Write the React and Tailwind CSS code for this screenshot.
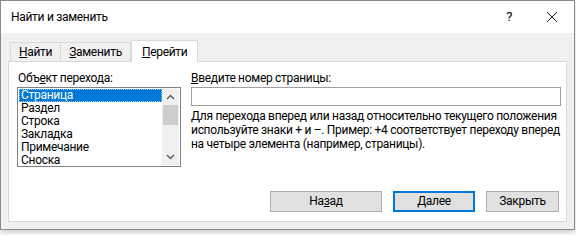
import React, { useState } from "react";

const items = ["Страница", "Раздел", "Строка", "Закладка", "Примечание", "Сноска"];

const Tab = ({ active, children, onClick }) => (
  <button
    onClick={onClick}
    className={
      active
        ? "relative z-10 -mb-px h-[22px] px-[10px] bg-white border border-b-0 border-[#d9d9d9] leading-[20px]"
        : "h-[19px] mt-[2px] px-[8px] bg-[#f0f0f0] border border-b-0 border-[#d9d9d9] -ml-px first:ml-0 leading-[18px]"
    }
  >
    {children}
  </button>
);

const Button = ({ primary, className, children }) => (
  <button
    className={
      "h-[21px] bg-[#e1e1e1] leading-[17px] " +
      (primary ? "border-2 border-[#0078d7] " : "border border-[#adadad] ") +
      className
    }
  >
    {children}
  </button>
);

export default function App() {
  const [tab, setTab] = useState(2);
  const [selected, setSelected] = useState(0);

  return (
    <div
      className="w-[576px] h-[235px] bg-white text-[12px] tracking-[-0.3px] text-black"
      style={{ fontFamily: 'Roboto, "Noto Sans", sans-serif' }}
    >
      <div className="w-[575px] h-[230px] flex flex-col bg-[#f0f0f0] border border-[#8a8a8a] shadow-[0_3px_5px_rgba(0,0,0,0.18)]">
        {/* title bar */}
        <div className="h-[32px] flex items-center bg-white">
          <span className="pl-[10px] text-[12px]">Найти и заменить</span>
          <span className="ml-auto mr-[34px] text-[13px]">?</span>
          <svg width="12" height="12" viewBox="0 0 12 12" className="mr-[16px]">
            <path d="M1 1 L11 11 M11 1 L1 11" stroke="#222" strokeWidth="1" />
          </svg>
        </div>

        <div className="flex-1 flex flex-col px-[7px] pt-[7px]">
          {/* tabs */}
          <div className="flex items-start pl-[2px] h-[21px]">
            <Tab active={tab === 0} onClick={() => setTab(0)}>
              <u>Н</u>айти
            </Tab>
            <Tab active={tab === 1} onClick={() => setTab(1)}>
              <u>З</u>аменить
            </Tab>
            <Tab active={tab === 2} onClick={() => setTab(2)}>
              <u>П</u>ерейти
            </Tab>
          </div>

          {/* panel */}
          <div className="h-[161px] flex flex-col bg-white border border-[#d9d9d9] pt-[8px] pb-[9px]">
            <div className="flex">
              <div className="w-[164px] shrink-0 ml-[8px]">
                <div className="h-[16px] leading-[16px] pl-[1px]">
                  Объ<u>е</u>кт перехода:
                </div>
                <div className="mt-[1px] h-[80px] flex border border-[#828282] p-px">
                  <div className="flex-1 flex flex-col">
                    {items.map((item, i) => (
                      <div
                        key={item}
                        onClick={() => setSelected(i)}
                        className={
                          "h-[13px] leading-[13px] pl-[2px] " +
                          (i === selected
                            ? "bg-[#0078d7] text-white outline outline-1 outline-dotted outline-[#99c9ef] -outline-offset-1"
                            : "")
                        }
                      >
                        {item}
                      </div>
                    ))}
                  </div>
                  <div className="w-[17px] flex flex-col bg-[#f0f0f0]">
                    <div className="h-[16px] flex items-center justify-center">
                      <svg width="9" height="6" viewBox="0 0 9 6">
                        <path d="M1 5 L4.5 1.5 L8 5" stroke="#606060" strokeWidth="1.5" fill="none" />
                      </svg>
                    </div>
                    <div className="h-[20px] mx-[1px] bg-[#cdcdcd]" />
                    <div className="flex-1" />
                    <div className="h-[16px] flex items-center justify-center">
                      <svg width="9" height="6" viewBox="0 0 9 6">
                        <path d="M1 1 L4.5 4.5 L8 1" stroke="#606060" strokeWidth="1.5" fill="none" />
                      </svg>
                    </div>
                  </div>
                </div>
              </div>

              <div className="flex-1 min-w-0 ml-[10px] mr-[5px]">
                <div className="h-[16px] leading-[16px]">
                  <u>В</u>ведите номер страницы:
                </div>
                <div className="mt-[1px] h-[19px] border border-[#a0a0a0] bg-white" />
                <p className="mt-[3px] leading-[14px] whitespace-nowrap">
                  Для перехода вперед или назад относительно текущего положения
                  <br />
                  используйте знаки + и –. Пример: +4 соответствует переходу вперед
                  <br />
                  на четыре элемента (например, страницы).
                </p>
              </div>
            </div>

            <div className="mt-auto flex justify-end gap-[11px] pr-[7px]">
              <Button className="w-[112px]">
                На<u>з</u>ад
              </Button>
              <Button primary className="w-[82px]">
                <u>Д</u>алее
              </Button>
              <Button className="w-[73px]">Закрыть</Button>
            </div>
          </div>
        </div>
      </div>
    </div>
  );
}
